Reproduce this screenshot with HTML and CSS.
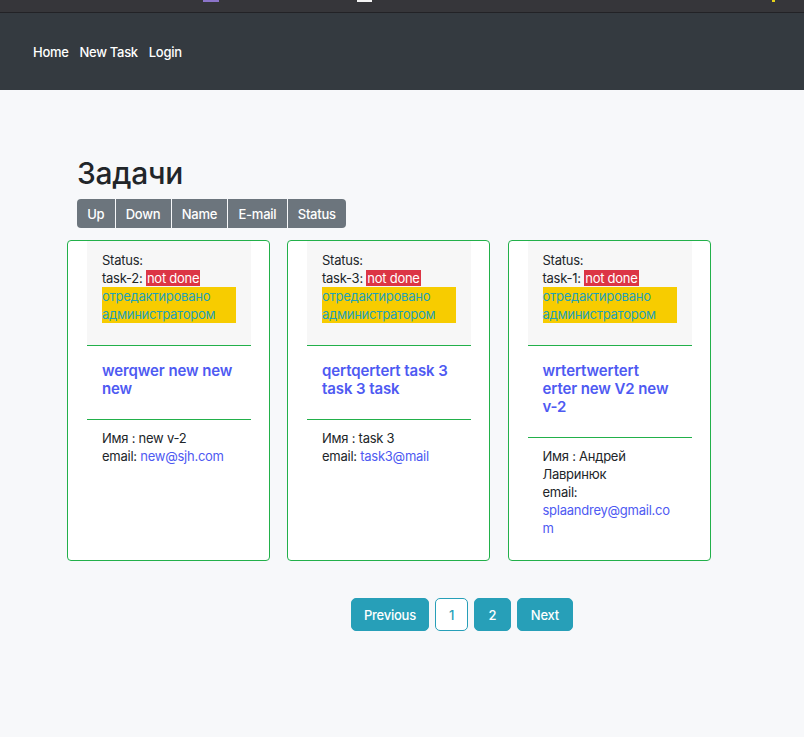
FILE: index.html
```html
<!DOCTYPE html>
<html lang="ru">
<head>
<meta charset="utf-8">
<title>Задачи</title>
<link rel="stylesheet" href="styles.css">
</head>
<body>
<div class="tabstrip">
  <span class="mark m1"></span>
  <span class="mark m2"></span>
  <span class="mark m3"></span>
</div>
<nav class="navbar">
  <a href="#" class="nav-link">Home</a>
  <a href="#" class="nav-link">New Task</a>
  <a href="#" class="nav-link">Login</a>
</nav>
<main class="main">
  <h1 class="title">Задачи</h1>
  <div class="btn-group">
    <button class="btn">Up</button>
    <button class="btn">Down</button>
    <button class="btn">Name</button>
    <button class="btn">E-mail</button>
    <button class="btn">Status</button>
  </div>
  <div class="cards">
    <div class="card">
      <div class="card-head">
        <div>Status:</div>
        <div>task-2: <span class="badge">not done</span></div>
        <div class="edited">отредактировано администратором</div>
      </div>
      <div class="card-body"><h5 class="task-title">werqwer new new new</h5></div>
      <div class="card-foot">
        <div>Имя : new v-2</div>
        <div>email: <a href="#" class="mail">new@sjh.com</a></div>
      </div>
    </div>
    <div class="card">
      <div class="card-head">
        <div>Status:</div>
        <div>task-3: <span class="badge">not done</span></div>
        <div class="edited">отредактировано администратором</div>
      </div>
      <div class="card-body"><h5 class="task-title">qertqertert task 3 task 3 task</h5></div>
      <div class="card-foot">
        <div>Имя : task 3</div>
        <div>email: <a href="#" class="mail">task3@mail</a></div>
      </div>
    </div>
    <div class="card">
      <div class="card-head">
        <div>Status:</div>
        <div>task-1: <span class="badge">not done</span></div>
        <div class="edited">отредактировано администратором</div>
      </div>
      <div class="card-body"><h5 class="task-title">wrtertwertert erter new V2 new v-2</h5></div>
      <div class="card-foot">
        <div>Имя : Андрей Лавринюк</div>
        <div>email: <a href="#" class="mail">splaandrey@gmail.com</a></div>
      </div>
    </div>
  </div>
  <div class="pagination">
    <a href="#" class="page page-prev">Previous</a>
    <a href="#" class="page page-outline">1</a>
    <a href="#" class="page page-num">2</a>
    <a href="#" class="page">Next</a>
  </div>
</main>
</body>
</html>
```
FILE: styles.css
```css
* { box-sizing: border-box; }
html, body { margin: 0; padding: 0; }
body {
  background: #f7f8fa;
  font-family: Inter, "Noto Sans", sans-serif;
  font-size: 13px;
  line-height: 18px;
  letter-spacing: -0.25px;
  color: #212529;
  height: 737px;
  overflow: hidden;
}
.tabstrip {
  height: 13px;
  background: #36363a;
  border-bottom: 1px solid #222226;
  display: flex;
  align-items: flex-start;
}
.mark { display: block; height: 2px; }
.m1 { width: 16px; background: #8b74c9; margin-left: 203px; }
.m2 { width: 15px; background: #f4f4f4; margin-left: 138px; }
.m3 { width: 3px; background: #e5d21a; margin-left: 400px; }
.navbar {
  height: 77px;
  background: #343a40;
  display: flex;
  align-items: center;
  padding: 0 0 0 33px;
  gap: 11px;
}
.nav-link {
  color: #ffffff;
  text-decoration: none;
  font-size: 13px;
  font-weight: 500;
  letter-spacing: -0.3px;
}
.main { padding: 0 0 0 77px; }
.title {
  margin: 64px 0 0;
  font-size: 30px;
  line-height: 38px;
  font-weight: 500;
  letter-spacing: -0.3px;
  color: #212529;
}
.btn-group {
  display: flex;
  margin-top: 7px;
  gap: 1px;
}
.btn {
  background: #6c757d;
  color: #fff;
  border: 0;
  font-family: Inter, "Noto Sans", sans-serif;
  font-size: 13px;
  font-weight: 500;
  letter-spacing: -0.25px;
  height: 29px;
  padding: 0 10.2px;
  border-radius: 0;
}
.btn:first-child { border-radius: 4px 0 0 4px; }
.btn:last-child { border-radius: 0 4px 4px 0; }
.cards {
  display: flex;
  gap: 17.5px;
  margin: 12px 0 0 -10px;
}
.card {
  width: 203px;
  height: 321px;
  border: 1px solid #22b04a;
  border-radius: 4px;
  background: #fff;
  padding: 0 18px 0 19px;
}
.card:nth-child(2) { margin-left: -0.5px; }
.card-head {
  background: #f7f7f7;
  padding: 10px 15px 22px;
  border-bottom: 1px solid #22b04a;
}
.badge {
  background: #dc3545;
  color: #fff;
  padding: 0 1px;
}
.edited {
  background: #f7cc00;
  color: #1ea1b8;
}
.card-body {
  padding: 16px 15px 21px;
  border-bottom: 1px solid #22b04a;
}
.task-title {
  margin: 0;
  font-size: 15px;
  line-height: 18px;
  font-weight: 600;
  letter-spacing: -0.1px;
  color: #4e5af2;
}
.card-foot { padding: 9px 15px; overflow-wrap: break-word; }
.mail { color: #4e5af2; text-decoration: none; }
.pagination {
  display: flex;
  gap: 6px;
  margin: 37px 0 0 274px;
}
.page {
  height: 33px;
  display: flex;
  align-items: center;
  padding: 0 13px;
  background: #279fb8;
  color: #fff;
  border: 1px solid #279fb8;
  border-radius: 5px;
  text-decoration: none;
  font-weight: 500;
  font-size: 13px;
}
.page-prev { padding: 0 12px; }
.page-outline {
  background: #fff;
  color: #279fb8;
  padding: 0 13px;
}
.page-num { padding: 0 13.5px; }
```
